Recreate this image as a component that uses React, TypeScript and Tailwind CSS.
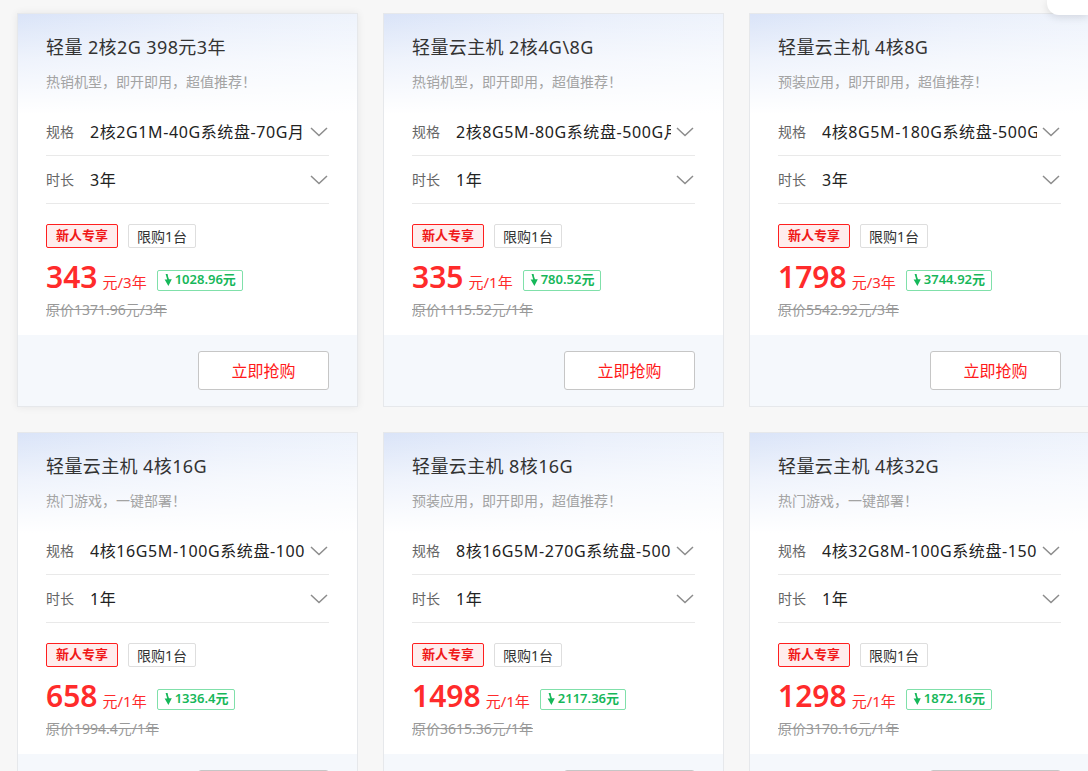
import { Fragment } from "react";

interface Plan {
    title: string;
    desc: string;
    spec: string;
    term: string;
    price: string;
    unit: string;
    save: string;
    original: string;
}

const plans: Plan[] = [
    {
        title: "轻量 2核2G 398元3年",
        desc: "热销机型，即开即用，超值推荐！",
        spec: "2核2G1M-40G系统盘-70G月流量",
        term: "3年",
        price: "343",
        unit: "元/3年",
        save: "1028.96元",
        original: "原价1371.96元/3年",
    },
    {
        title: "轻量云主机 2核4G\\8G",
        desc: "热销机型，即开即用，超值推荐！",
        spec: "2核8G5M-80G系统盘-500G月流量",
        term: "1年",
        price: "335",
        unit: "元/1年",
        save: "780.52元",
        original: "原价1115.52元/1年",
    },
    {
        title: "轻量云主机 4核8G",
        desc: "预装应用，即开即用，超值推荐！",
        spec: "4核8G5M-180G系统盘-500G月流量",
        term: "3年",
        price: "1798",
        unit: "元/3年",
        save: "3744.92元",
        original: "原价5542.92元/3年",
    },
    {
        title: "轻量云主机 4核16G",
        desc: "热门游戏，一键部署！",
        spec: "4核16G5M-100G系统盘-1000G月流量",
        term: "1年",
        price: "658",
        unit: "元/1年",
        save: "1336.4元",
        original: "原价1994.4元/1年",
    },
    {
        title: "轻量云主机 8核16G",
        desc: "预装应用，即开即用，超值推荐！",
        spec: "8核16G5M-270G系统盘-5000G月流量",
        term: "1年",
        price: "1498",
        unit: "元/1年",
        save: "2117.36元",
        original: "原价3615.36元/1年",
    },
    {
        title: "轻量云主机 4核32G",
        desc: "热门游戏，一键部署！",
        spec: "4核32G8M-100G系统盘-1500G月流量",
        term: "1年",
        price: "1298",
        unit: "元/1年",
        save: "1872.16元",
        original: "原价3170.16元/1年",
    },
];

function Chevron() {
    return (
        <svg width="18" height="10" viewBox="0 0 18 10" className="shrink-0">
            <polyline points="1,1 9,8.5 17,1" fill="none" stroke="#8c8c8c" strokeWidth="1.5" />
        </svg>
    );
}

function DropArrow() {
    return (
        <svg width="8" height="12" viewBox="0 0 8 12" className="shrink-0">
            <path d="M1.6 0 L3.6 0 Q4 3 5 5.2 L7.8 5.2 L4.4 12 L0.6 5.6 L3.2 5.4 Q2.4 2.8 1.6 0Z" fill="#16b85a" />
        </svg>
    );
}

function SelectRow({ label, value }: { label: string; value: string }) {
    return (
        <div className="flex h-[48px] items-center border-b border-[#e9e9e9]">
            <span className="w-[44px] shrink-0 text-[14px] text-[#666]">{label}</span>
            <span className="w-[215px] overflow-hidden whitespace-nowrap text-[16px] tracking-[0.6px] text-[#222]">{value}</span>
            <span className="ml-auto pr-[1px]">
                <Chevron />
            </span>
        </div>
    );
}

function PlanCard({ plan, first }: { plan: Plan; first?: boolean }) {
    return (
        <div
            className={
                "flex w-[341px] shrink-0 flex-col border border-[#e6e8eb] bg-white " +
                (first ? "shadow-[0_0_8px_rgba(0,0,0,0.07)]" : "")
            }
        >
            <div className="bg-[linear-gradient(180deg,rgba(255,255,255,0)_0px,rgba(255,255,255,0.55)_45px,#ffffff_100px),linear-gradient(90deg,#dae4f8_0%,#e9effb_60%,#eef3fc_100%)] px-[28px] pb-[15px] pt-[20px]">
                <div className="text-[18px] leading-[26px] tracking-[0.4px] text-[#333]">{plan.title}</div>
                <div className="mt-[12px] text-[14px] leading-[20px] text-[#a3a3a3]">{plan.desc}</div>
                <div className="mt-[16px]">
                    <SelectRow label="规格" value={plan.spec} />
                    <SelectRow label="时长" value={plan.term} />
                </div>
                <div className="mt-[20px] flex gap-[10px]">
                    <span className="flex h-[24px] items-center rounded-[2px] border border-[#ff1f1f] bg-[#ffeded] px-[9px] text-[13px] font-bold text-[#f01818]">
                        新人专享
                    </span>
                    <span className="flex h-[24px] items-center rounded-[2px] border border-[#dedede] px-[8px] text-[14px] text-[#333]">
                        限购1台
                    </span>
                </div>
                <div className="mt-[11px] flex h-[36px] items-center">
                    <div className="flex items-baseline">
                        <span className="text-[30px] font-semibold leading-[36px] text-[#ff2b2b]">{plan.price}</span>
                        <span className="ml-[5px] text-[15px] text-[#ff2b2b]">{plan.unit}</span>
                    </div>
                    <span className="ml-[10px] mt-[6px] flex h-[21px] items-center gap-[3px] rounded-[2px] border border-[#80e0aa] px-[6px] text-[13px] font-semibold text-[#17b75a]">
                        <DropArrow />
                        {plan.save}
                    </span>
                </div>
                <div className="mt-[5px] text-[14px] leading-[20px] text-[#999] line-through">{plan.original}</div>
            </div>
            <div className="flex h-[71px] items-center justify-end bg-[#f5f8fc] px-[28px]">
                <button className="h-[39px] w-[131px] rounded-[3px] border border-[#c6c6c6] bg-white text-[16px] text-[#ff1a1a]">
                    立即抢购
                </button>
            </div>
        </div>
    );
}

export default function App() {
    return (
        <div className="relative h-[771px] w-[1088px] overflow-hidden bg-[#f7f7f7] font-['Noto_Sans','Noto_Sans_CJK_SC',sans-serif]">
            <div className="grid w-[1100px] grid-cols-[341px_341px_341px] gap-[25px] pl-[17px] pt-[13px]">
                {plans.map((p, i) => (
                    <Fragment key={i}>
                        <PlanCard plan={p} first={i === 0} />
                    </Fragment>
                ))}
            </div>
            <div className="absolute right-0 top-0 h-[15px] w-[41px] rounded-bl-[12px] bg-white shadow-[0_2px_8px_rgba(0,0,0,0.12)]" />
        </div>
    );
}
